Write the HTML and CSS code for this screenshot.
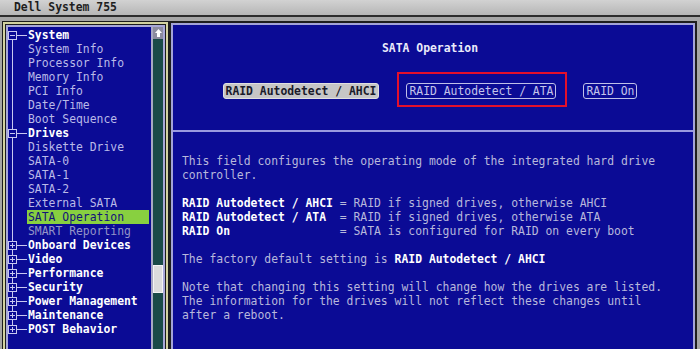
FILE: index.html
```html
<!DOCTYPE html>
<html>
<head>
<meta charset="utf-8">
<link rel="stylesheet" href="styles.css">
</head>
<body>
<div class="titlebar">Dell System 755</div>
<div class="main">
  <div class="lp"><div class="lp-y"><div class="lp-d"><div class="lp-l">
    <div class="tree">
      <div class="row"><div class="gut node first"><span class="box minus"></span></div><div class="txt head">System</div></div>
      <div class="row"><div class="gut line"></div><div class="txt">System Info</div></div>
      <div class="row"><div class="gut line"></div><div class="txt">Processor Info</div></div>
      <div class="row"><div class="gut line"></div><div class="txt">Memory Info</div></div>
      <div class="row"><div class="gut line"></div><div class="txt">PCI Info</div></div>
      <div class="row"><div class="gut line"></div><div class="txt">Date/Time</div></div>
      <div class="row"><div class="gut line"></div><div class="txt">Boot Sequence</div></div>
      <div class="row"><div class="gut node"><span class="box minus"></span></div><div class="txt head">Drives</div></div>
      <div class="row"><div class="gut line"></div><div class="txt">Diskette Drive</div></div>
      <div class="row"><div class="gut line"></div><div class="txt">SATA-0</div></div>
      <div class="row"><div class="gut line"></div><div class="txt">SATA-1</div></div>
      <div class="row"><div class="gut line"></div><div class="txt">SATA-2</div></div>
      <div class="row"><div class="gut line"></div><div class="txt">External SATA</div></div>
      <div class="row"><div class="gut line"></div><div class="txt sel">SATA Operation</div></div>
      <div class="row"><div class="gut line"></div><div class="txt dim">SMART Reporting</div></div>
      <div class="row"><div class="gut node"><span class="box plus"></span></div><div class="txt head">Onboard Devices</div></div>
      <div class="row"><div class="gut node"><span class="box plus"></span></div><div class="txt head">Video</div></div>
      <div class="row"><div class="gut node"><span class="box plus"></span></div><div class="txt head">Performance</div></div>
      <div class="row"><div class="gut node"><span class="box plus"></span></div><div class="txt head">Security</div></div>
      <div class="row"><div class="gut node"><span class="box plus"></span></div><div class="txt head">Power Management</div></div>
      <div class="row"><div class="gut node"><span class="box plus"></span></div><div class="txt head">Maintenance</div></div>
      <div class="row"><div class="gut node last"><span class="box plus"></span></div><div class="txt head">POST Behavior</div></div>
    </div>
    <div class="scroll">
      <div class="sc-up"><svg width="9" height="10" viewBox="0 0 9 10"><path d="M4.5 1 L8 5 H6 V9 H3 V5 H1 Z" fill="#ffffff"/></svg></div>
      <div class="sc-thumb"></div>
    </div>
  </div></div></div></div>

  <div class="rp"><div class="rp-l">
    <div class="rtitle">SATA Operation</div>
    <div class="btns">
      <span class="btn on">RAID Autodetect / AHCI</span>
      <span class="hl"><span class="btn">RAID Autodetect / ATA</span></span>
      <span class="btn">RAID On</span>
    </div>
    <div class="sep"></div>
    <div class="help">
      <p>This field configures the operating mode of the integrated hard drive
controller.</p>
      <p><b>RAID Autodetect / AHCI</b> = RAID if signed drives, otherwise AHCI
<b>RAID Autodetect / ATA</b>  = RAID if signed drives, otherwise ATA
<b>RAID On</b>                = SATA is configured for RAID on every boot</p>
      <p>The factory default setting is <b>RAID Autodetect / AHCI</b></p>
      <p>Note that changing this setting will change how the drives are listed.
The information for the drives will not reflect these changes until
after a reboot.</p>
    </div>
  </div></div>
</div>
</body>
</html>
```
FILE: styles.css
```css
html, body {
  margin: 0;
  padding: 0;
  width: 700px;
  height: 349px;
  overflow: hidden;
  background: #a6a6a6;
  font-family: "DejaVu Sans Mono", "Liberation Mono", monospace;
  font-size: 11.4px;
}

.titlebar {
  height: 15px;
  line-height: 15px;
  padding-left: 14px;
  background: linear-gradient(#d2d2d2, #b6b6b6);
  border-bottom: 2px solid #2c2c2c;
  color: #1e1e1e;
  font-weight: bold;
}

.main {
  display: flex;
  box-sizing: border-box;
  padding: 4px 3px 0 2px;
  height: 332px;
}

/* left panel */
.lp {
  width: 165px;
  flex: none;
  border: 1px solid #1c1c1c;
  border-bottom: 0;
  display: flex;
}
.lp-y { flex: 1; display: flex; border: 2px solid #d2d2a0; border-bottom: 0; }
.lp-d { flex: 1; display: flex; border: 1px solid #1c1c1c; border-bottom: 0; }
.lp-l {
  flex: 1;
  display: flex;
  border: 2px solid #a8a8d8;
  border-bottom: 0;
  background: #0b0b95;
}

.tree {
  flex: 1;
  padding-top: 1px;
}
.row {
  display: flex;
  height: 14px;
  line-height: 14px;
}
.gut {
  width: 19px;
  flex: none;
  display: flex;
  align-items: center;
}
.gut.line {
  background: linear-gradient(#c8c8f0, #c8c8f0) 4px 0 / 1px 100% no-repeat;
}
.gut.node {
  background:
    linear-gradient(#c8c8f0, #c8c8f0) 4px 0 / 1px 100% no-repeat,
    linear-gradient(#c8c8f0, #c8c8f0) 9px 7px / 10px 1px no-repeat;
}
.gut.node.first {
  background:
    linear-gradient(#c8c8f0, #c8c8f0) 4px 7px / 1px 7px no-repeat,
    linear-gradient(#c8c8f0, #c8c8f0) 9px 7px / 10px 1px no-repeat;
}
.gut.node.last {
  background:
    linear-gradient(#c8c8f0, #c8c8f0) 4px 0 / 1px 7px no-repeat,
    linear-gradient(#c8c8f0, #c8c8f0) 9px 7px / 10px 1px no-repeat;
}
.box {
  width: 7px;
  height: 7px;
  border: 1px solid #c8c8f0;
  background-color: #0b0b95;
}
.box.minus {
  background-image: linear-gradient(#c8c8f0, #c8c8f0);
  background-size: 5px 1px;
  background-position: 1px 3px;
  background-repeat: no-repeat;
}
.box.plus {
  background-image: linear-gradient(#c8c8f0, #c8c8f0), linear-gradient(#c8c8f0, #c8c8f0);
  background-size: 5px 1px, 1px 5px;
  background-position: 1px 3px, 3px 1px;
  background-repeat: no-repeat;
}
.txt {
  flex: 1;
  padding-left: 1px;
  color: #babae8;
  white-space: pre;
}
.txt.head { color: #ffffff; font-weight: bold; }
.txt.dim { color: #9494c8; }
.txt.sel { background: #88d040; color: #12127a; margin-right: 2px; }

.scroll {
  width: 10px;
  flex: none;
  border-left: 2px solid #a8a8c4;
  background: #1a4a48;
  display: flex;
  flex-direction: column;
}
.sc-up {
  height: 12px;
  background: #8c8ca0;
  display: flex;
  align-items: center;
  justify-content: center;
}
.sc-thumb {
  margin-top: 226px;
  height: 28px;
  background: #dcdcdc;
  border: 1px solid #f4f4f4;
  box-sizing: border-box;
}

/* right panel */
.rp {
  flex: 1;
  display: flex;
  border: 2px solid #1e1e1e;
  border-bottom: 0;
}
.rp-l {
  flex: 1;
  border: 2px solid #a4a4d8;
  border-bottom: 0;
  background: #0b0b95;
  display: flex;
  flex-direction: column;
}
.rtitle {
  margin-top: 16px;
  height: 14px;
  line-height: 14px;
  text-align: center;
  padding-right: 6px;
  color: #eaeafa;
  font-weight: bold;
}
.btns {
  margin-top: 28px;
  display: flex;
  justify-content: center;
  gap: 27px;
  padding-right: 6px;
}
.btn {
  display: block;
  height: 14px;
  line-height: 14px;
  padding: 0 2px;
  border: 1px solid #c0c0e8;
  border-radius: 3px;
  color: #c4c4ea;
  white-space: pre;
}
.btn.on {
  background: #c6c6c6;
  border-color: #e0e0e0;
  color: #1a1a2a;
  font-weight: bold;
}
.hl {
  position: relative;
  display: block;
}
.hl::after {
  content: "";
  position: absolute;
  top: -11px;
  bottom: -8px;
  left: -9px;
  right: -11px;
  border: 2px solid #e4102c;
}
.sep {
  margin-top: 31px;
  height: 2px;
  background: #9a9ae0;
}
.help {
  padding: 22px 0 0 9px;
  color: #b8b8dc;
  line-height: 14px;
}
.help p {
  margin: 0 0 14px 0;
  white-space: pre;
}
.help b {
  color: #ffffff;
  font-weight: bold;
}
```
